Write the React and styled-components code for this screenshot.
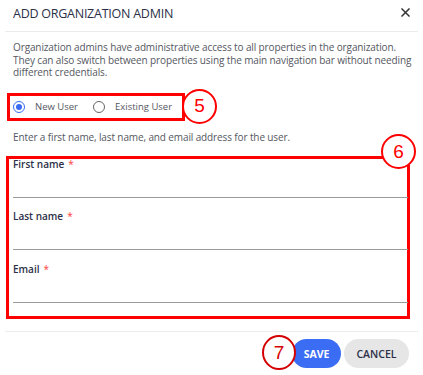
import React from "react";
import styled, { createGlobalStyle } from "styled-components";

const Global = createGlobalStyle`
  html, body { margin: 0; padding: 0; background: #fff; }
  body { font-family: "Open Sans", "Noto Sans", sans-serif; }
  * { box-sizing: border-box; }
`;

const Dialog = styled.div`
  width: 423px;
  height: 375px;
  background: #fff;
  padding: 0 5px;
  display: flex;
  flex-direction: column;
  color: #2b3048;
`;

const Header = styled.div`
  height: 32px;
  display: flex;
  align-items: center;
  justify-content: space-between;
  padding: 0 8px 0 8px;
  border-bottom: 1px solid #ececec;
`;

const Title = styled.h1`
  margin: 0;
  font-size: 12.5px;
  font-weight: 500;
  letter-spacing: -0.25px;
  color: #2b3048;
  line-height: 1;
  margin-top: -3px;
`;

const Close = styled.button`
  border: 0;
  background: none;
  padding: 0;
  width: 9px;
  height: 9px;
  display: flex;
  margin-top: -7px;
  cursor: pointer;
`;

const Body = styled.div`
  padding: 9px 3px 0 8px;
  display: flex;
  flex-direction: column;
`;

const Text = styled.p`
  margin: 0;
  font-size: 10px;
  line-height: 12.5px;
  letter-spacing: -0.12px;
  color: #55575f;
`;

const RadioBox = styled.div`
  position: relative;
  align-self: flex-start;
  margin: 14px 0 0 -6px;
  border: 3px solid #ff0000;
  height: 28px;
  width: 178px;
  display: flex;
  align-items: center;
  padding-left: 3px;
  gap: 15px;
`;

const RadioLabel = styled.label`
  display: flex;
  align-items: center;
  gap: 10px;
  font-size: 9.5px;
  color: #55575f;
`;

const RadioDot = styled.span`
  width: 12px;
  height: 12px;
  border-radius: 50%;
  border: 1.5px solid ${(p) => (p.$on ? "#3a6cf4" : "#666")};
  display: flex;
  align-items: center;
  justify-content: center;
  &::after {
    content: "";
    width: 6px;
    height: 6px;
    border-radius: 50%;
    background: ${(p) => (p.$on ? "#3a6cf4" : "transparent")};
  }
`;

const Marker = styled.span`
  position: absolute;
  width: 35px;
  height: 35px;
  border-radius: 50%;
  border: ${(p) => (p.$thin ? "2px solid #d40000" : "2.5px solid #ff0000")};
  background: #fff;
  color: ${(p) => (p.$thin ? "#d40000" : "#ff0000")};
  font-family: "Liberation Sans", Arial, sans-serif;
  font-size: 19px;
  font-weight: 400;
  display: flex;
  align-items: center;
  justify-content: center;
  z-index: 2;
`;

const Marker5 = styled(Marker)`
  left: 172px;
  top: -7px;
`;

const Hint = styled(Text)`
  margin-top: 10px;
`;

const FieldBox = styled.div`
  position: relative;
  margin: 13px 0 0 -7px;
  width: 404px;
  height: 163px;
  border: 3px solid #ff0000;
  padding: 0 0 0 4px;
  display: flex;
  flex-direction: column;
`;

const Marker6 = styled(Marker)`
  left: 372px;
  top: -25px;
`;

const Field = styled.div`
  height: 54px;
  display: flex;
  flex-direction: column;
`;

const Label = styled.label`
  font-size: 10px;
  font-weight: 600;
  color: #2b3048;
  line-height: 12px;
  margin-top: -1px;
  span { color: #ff3b3b; margin-left: 4px; font-weight: 400; }
`;

const Input = styled.input`
  border: 0;
  border-bottom: 1px solid #9a9a9a;
  height: 28px;
  margin: 0;
  padding: 0;
  outline: none;
  background: transparent;
  width: 395px;
  font-family: inherit;
`;

const Footer = styled.div`
  margin-top: 12px;
  border-top: 1px solid #ececec;
  display: flex;
  justify-content: flex-end;
  gap: 3px;
  padding: 7px 9px 0 0;
`;

const Btn = styled.button`
  position: relative;
  height: 29px;
  border: 0;
  border-radius: 15px;
  padding: 0;
  width: ${(p) => p.$w}px;
  background: ${(p) => (p.$primary ? "#3a6df4" : "#e6e6e6")};
  color: ${(p) => (p.$primary ? "#fff" : "#2b3048")};
  font-family: "Open Sans", sans-serif;
  font-size: 10.5px;
  font-weight: ${(p) => (p.$primary ? 700 : 600)};
  cursor: pointer;
`;

const Marker7 = styled(Marker)`
  left: -30px;
  top: -4px;
  width: 34px;
  height: 35px;
`;

const X = () => (
  <svg width="9" height="9" viewBox="0 0 9 9">
    <path d="M1 1 L8 8 M8 1 L1 8" stroke="#333" strokeWidth="1.5" strokeLinecap="square" />
  </svg>
);

export default function App() {
  return (
    <>
      <Global />
      <Dialog>
        <Header>
          <Title>ADD ORGANIZATION ADMIN</Title>
          <Close aria-label="close"><X /></Close>
        </Header>
        <Body>
          <Text>
            Organization admins have administrative access to all properties in the organization.
            They can also switch between properties using the main navigation bar without needing
            different credentials.
          </Text>
          <RadioBox>
            <RadioLabel><RadioDot $on />New User</RadioLabel>
            <RadioLabel><RadioDot />Existing User</RadioLabel>
            <Marker5>5</Marker5>
          </RadioBox>
          <Hint>Enter a first name, last name, and email address for the user.</Hint>
          <FieldBox>
            <Marker6>6</Marker6>
            <Field>
              <Label>First name<span>*</span></Label>
              <Input />
            </Field>
            <Field>
              <Label>Last name<span>*</span></Label>
              <Input />
            </Field>
            <Field>
              <Label>Email<span>*</span></Label>
              <Input />
            </Field>
          </FieldBox>
        </Body>
        <Footer>
          <Btn $primary $w={49}>
            <Marker7 $thin>7</Marker7>
            SAVE
          </Btn>
          <Btn $w={65}>CANCEL</Btn>
        </Footer>
      </Dialog>
    </>
  );
}
